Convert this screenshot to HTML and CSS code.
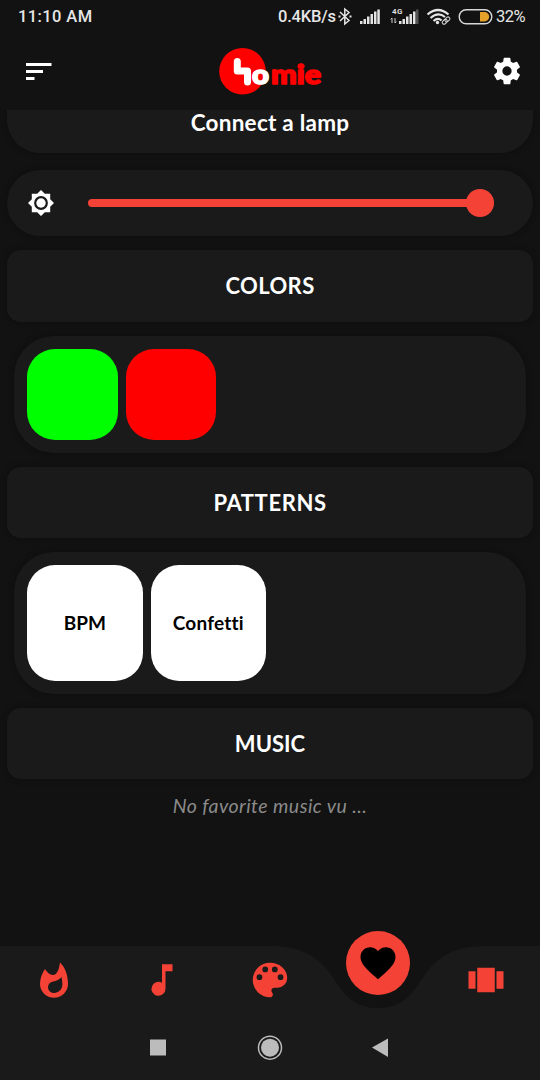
FILE: index.html
```
<!DOCTYPE html>
<html lang="en">
<head>
<meta charset="utf-8">
<title>Homie</title>
<link rel="stylesheet" href="styles.css">
</head>
<body>
<div class="screen">
  <div class="status">
    <span class="clock">11:10 AM</span>
    <span class="speed">0.4KB/s</span>
    <svg class="signals" width="159" height="34" viewBox="337 0 159 34">
      <path d="M341 12L350 20.500L345.800 24V9L350 12.500L341 21" fill="none" stroke="#e4e4e4" stroke-width="1.500"/>
      <path d="M339.500 16.500h2M350.500 16.500h2" stroke="#e4e4e4" stroke-width="2"/>
      <path d="M361 21h2.500v3h-2.500zM364.500 19h2.500v5h-2.500zM368 16.500h2.500v7.500h-2.500zM371.500 14h2.500v10h-2.500zM375 11.500h2.500v12.500h-2.500zM378.300 9.500h2.500v14.500h-2.500z" fill="#e4e4e4"/>
      <text class="network" x="393" y="14" textLength="10.500">4G</text>
      <path d="M393 23v-5M391.700 19.500l1.300-1.500M396 18v5M397.300 21.500L396 23" fill="none" stroke="#ccc" stroke-width="1"/>
      <path d="M400 21h2.500v3H400zM403.500 19h2.500v5h-2.500zM407 16.500h2.500v7.500H407zM410.500 14h2.500v10h-2.500zM414 11.500h2.500v12.500H414z" fill="#e4e4e4"/>
      <path d="M417 9.500h2.500v14.500H417z" fill="#555"/>
      <path d="M428.500 14.500Q439 5.500 449.500 14.500M431.500 18Q439 11.500 446 17M434.500 21Q439 17 442.500 20.500" fill="none" stroke="#e4e4e4" stroke-width="2.200"/>
      <circle cx="438.500" cy="22.500" r="1.700" fill="#e4e4e4"/>
      <g fill="none" stroke="#d0d0d0" stroke-width="1.100" transform="rotate(-42 447 20.500)">
        <rect x="442.500" y="18.800" width="5.500" height="3.600" rx="1.800"/>
        <rect x="446" y="18.800" width="5.500" height="3.600" rx="1.800"/>
      </g>
      <rect x="460.200" y="9.700" width="32.600" height="14" rx="7" fill="none" stroke="#d8d8d8" stroke-width="1.400"/>
      <path d="M481 12h4.500a4.700 4.700 0 0 1 0 9.400H481z" fill="#e6a12b"/>
    </svg>
    <span class="battery">32%</span>
  </div>

  <header class="header">
    <svg width="26" height="18" viewBox="0 0 26 18" fill="#fff"><path d="M0 1h25.500v3H0zM0 8h17v3H0zM0 15h8.500v3H0z"/></svg>
    <svg class="logo" width="104" height="48" viewBox="218 47 104 48">
      <circle cx="242.500" cy="71.300" r="23.300" fill="#f00"/>
      <path d="M237.300 61.500V71H247.500V82" fill="none" stroke="#fff" stroke-width="7" stroke-linecap="round" stroke-linejoin="round"/>
      <text class="logo-text" y="84.200"><tspan x="252" fill="#fff" stroke="#fff" textLength="17" lengthAdjust="spacingAndGlyphs">o</tspan><tspan x="271" fill="#f00" stroke="#f00" textLength="50" lengthAdjust="spacingAndGlyphs">mie</tspan></text>
    </svg>
    <svg class="gear" width="32" height="32" viewBox="0 0 24 24" fill="#fff"><path d="M19.430 12.980c.040-.320.070-.640.070-.980s-.030-.660-.070-.980l2.110-1.650c.190-.150.240-.420.120-.640l-2-3.460c-.120-.220-.390-.300-.610-.220l-2.490 1c-.520-.400-1.080-.730-1.690-.980l-.380-2.650C14.460 2.180 14.250 2 14 2h-4c-.250 0-.460.180-.490.420l-.380 2.650c-.610.250-1.170.590-1.690.980l-2.490-1c-.230-.090-.490 0-.610.220l-2 3.460c-.130.220-.070.490.120.640l2.110 1.650c-.040.320-.070.650-.070.980s.030.660.070.980l-2.110 1.650c-.190.150-.240.420-.120.640l2 3.460c.120.220.390.300.610.220l2.490-1c.520.400 1.080.730 1.690.980l.380 2.650c.030.240.240.420.490.420h4c.250 0 .460-.180.490-.420l.380-2.650c.610-.250 1.170-.590 1.690-.980l2.490 1c.230.090.490 0 .610-.220l2-3.460c.120-.220.070-.490-.120-.640zM12 15.500a3.500 3.500 0 1 1 0-7 3.500 3.500 0 0 1 0 7z"/></svg>
  </header>

  <main class="content">
    <div class="card connect"><span class="connect-label">Connect a lamp</span></div>
    <div class="card slider">
      <svg width="26" height="26" viewBox="0.700 0.700 22.600 22.600" fill="#fff"><path d="M20 8.690V4h-4.690L12 .690 8.690 4H4v4.690L.690 12 4 15.310V20h4.690L12 23.310 15.310 20H20v-4.690L23.310 12 20 8.690zM12 18a6 6 0 1 1 0-12 6 6 0 0 1 0 12z"/><circle cx="12" cy="12" r="4.100"/></svg>
      <div class="track"><div class="thumb"></div></div>
    </div>
    <h2 class="card title colors">COLORS</h2>
    <div class="card panel">
      <div class="swatch green"></div>
      <div class="swatch red"></div>
    </div>
    <h2 class="card title patterns">PATTERNS</h2>
    <div class="card panel">
      <div class="tile bpm">BPM</div>
      <div class="tile confetti">Confetti</div>
    </div>
    <h2 class="card title music">MUSIC</h2>
    <p class="empty">No favorite music vu ...</p>
  </main>

  <footer class="bottom">
    <svg class="curve" width="540" height="149" viewBox="0 0 540 149"><path d="M0 15H270C300 15 317 25 329 41C342 59 350 77 378 77S414 59 427 41C439 25 456 15 486 15H540V149H0Z" fill="#1a1a1a"/></svg>
    <nav class="tabs">
      <svg width="42" height="42" viewBox="0 0 24 24" fill="#f44336"><path d="M15.400 2C14.900 6 13.800 9.100 11.400 9.100 9.600 9.100 8.300 7.800 7.200 6.300L6.800 5.700C5.300 7.900 4 11 4 14.200a8 8 0 0 0 16 0C20 9.400 18.500 5 15.400 2zM12 19.400c-1.900 0-3.400-1.500-3.400-3.300 0-1.700 1.100-2.800 2.900-3.200 1.800-.400 3.700-1.200 4.700-2.600.400 1.300.600 2.700.600 4.100 0 2.800-2.100 5-4.800 5z"/></svg>
      <svg width="42" height="42" viewBox="0 0 24 24" fill="#f44336"><path d="M12 3v10.550A4 4 0 1 0 14 17V7h4V3z"/></svg>
      <svg width="46" height="46" viewBox="0 0 24 24" fill="#f44336"><path d="M12 3a9 9 0 0 0 0 18c.830 0 1.500-.670 1.500-1.500 0-.390-.150-.740-.390-1.010-.230-.260-.380-.610-.380-.990 0-.830.670-1.500 1.500-1.500H16a5 5 0 0 0 5-5c0-4.420-4.030-8-9-8zm-5.500 9a1.500 1.500 0 1 1 0-3 1.500 1.500 0 0 1 0 3zm3-4a1.500 1.500 0 1 1 0-3 1.500 1.500 0 0 1 0 3zm5 0a1.500 1.500 0 1 1 0-3 1.500 1.500 0 0 1 0 3zm3 4a1.500 1.500 0 1 1 0-3 1.500 1.500 0 0 1 0 3z"/></svg>
      <div class="favorite"><svg width="42" height="42" viewBox="0 0 24 24"><path d="M12 21.350l-1.450-1.320C5.400 15.360 2 12.280 2 8.500 2 5.420 4.420 3 7.500 3c1.740 0 3.410.810 4.500 2.090C13.090 3.810 14.760 3 16.500 3 19.580 3 22 5.420 22 8.500c0 3.780-3.400 6.860-8.550 11.540z"/></svg></div>
      <svg width="42" height="42" viewBox="0 0 24 24" fill="#f44336"><path d="M7 19h10V5H7zM2 17h4V7H2zM18 7v10h4V7z"/></svg>
    </nav>
    <div class="system">
      <svg width="260" height="30" viewBox="140 1033 260 30" fill="#bcbcbc"><path d="M150 1039.500h16v16h-16zM372 1047.500L388 1038.500V1057z"/><circle cx="270" cy="1047.700" r="9"/><circle cx="270" cy="1047.700" r="11.500" fill="none" stroke="#bcbcbc" stroke-width="1.500"/></svg>
    </div>
  </footer>
</div>
</body>
</html>
```
FILE: styles.css
```
* { box-sizing: border-box; }
body { margin: 0; background: #121212; }
.screen {
  width: 540px; height: 1080px; display: flex; flex-direction: column;
  overflow: hidden; background: #121212; color: #fff;
  font-family: Lato, "Open Sans", sans-serif;
}
.status {
  height: 34px; display: flex; align-items: center; padding: 0 14px 0 18px;
  font: 500 16.5px/34px Roboto, sans-serif; color: #e6e6e6; white-space: nowrap;
}
.clock { margin-right: auto; letter-spacing: 0.4px; }
.speed { width: 59px; letter-spacing: -0.2px; padding-left: 1px; }
.signals { flex: none; }
.battery { width: 30px; margin-left: 1px; font-weight: 400; letter-spacing: -0.5px; }
.network { font: 700 8px Roboto, sans-serif; fill: #ddd; }
.header {
  height: 76px; display: flex; align-items: flex-start; justify-content: space-between;
  padding: 13px 17px 0 26px;
}
.header > svg:first-child { margin-top: 15px; }
.logo { margin-right: 4px; }
.logo-text { font: 900 27px Lato, sans-serif; stroke-width: 1.6px; stroke-linejoin: round; }
.gear { margin-top: 8px; }
.content { flex: 1; overflow: hidden; display: flex; flex-direction: column; padding: 0 7px; }
.card { background: #1a1a1a; box-shadow: 0 0 5px 1px #0f0f0f; flex: none; }
.connect {
  height: 43px; border-radius: 0 0 33px 33px; margin: 0 0 17px;
  display: flex; justify-content: center;
}
.connect-label { font-size: 22.5px; font-weight: 700; line-height: 25px; letter-spacing: 0.25px; }
.slider {
  height: 66px; border-radius: 33px; display: flex; align-items: center;
  gap: 34px; padding: 0 39.5px 0 21px; margin-bottom: 14px;
}
.track {
  flex: 1; height: 8px; border-radius: 4px; background: #f44336;
  display: flex; align-items: center; justify-content: flex-end;
}
.thumb { width: 28px; height: 28px; border-radius: 50%; background: #f44336; }
.title {
  height: 71.5px; border-radius: 14px; margin: 0 0 14px; text-align: center;
  font-size: 22px; font-weight: 700; line-height: 71px;
}
.colors { letter-spacing: 0.4px; }
.patterns { letter-spacing: 0.6px; }
.panel {
  margin: 0 7px 14px; padding: 13px; border-radius: 40px; display: flex; gap: 8px;
}
.swatch { width: 90.5px; height: 91px; border-radius: 28px; }
.green { background: #0f0; }
.red { background: #f00; }
.tile {
  width: 115.5px; height: 115.5px; border-radius: 28px; background: #fff; color: #000;
  text-align: center; font-size: 19px; font-weight: 700; line-height: 115px;
}
.confetti { letter-spacing: 0.2px; font-variant-ligatures: common-ligatures; }
.empty {
  margin: 0; text-align: center; color: #8b8b8b;
  font-size: 19.5px; font-style: italic; line-height: 26px; letter-spacing: 0.45px;
}
.bottom { flex: none; height: 149px; position: relative; }
.curve { position: absolute; left: 0; top: 0; }
.tabs {
  position: relative; height: 98px; display: grid; grid-template-columns: repeat(5, 1fr);
  align-items: center; justify-items: center;
}
.favorite {
  width: 64px; height: 64px; border-radius: 50%; background: #f44336;
  display: flex; align-items: center; justify-content: center; margin-bottom: 34px;
}
.system { position: relative; display: flex; justify-content: center; padding-top: 4px; }
```
